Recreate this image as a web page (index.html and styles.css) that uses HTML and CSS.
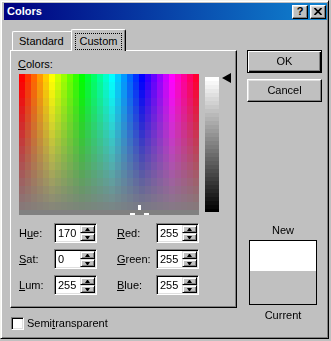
FILE: index.html
```html
<!DOCTYPE html>
<html lang="en">
<head>
    <meta charset="UTF-8">
    <meta name="viewport" content="width=device-width, initial-scale=1.0">
    <title>Colors</title>
    <link rel="stylesheet" href="styles.css">
</head>
<body>
<div class="window">
    <!-- caption bar -->
    <div class="titlebar">
        <span class="title">Colors</span>
        <span class="cap-btn help">?</span>
        <span class="cap-btn close">
            <svg width="8" height="7" viewBox="0 0 8 7"><path d="M0.5 0 L7.5 7 M7.5 0 L0.5 7" stroke="#000" stroke-width="1.7"/></svg>
        </span>
    </div>

    <div class="client">
        <div class="left-col">
            <div class="tabs">
                <div class="tab">Standard</div>
                <div class="tab active"><span class="focus">Custom</span></div>
            </div>

            <div class="panel">
                <div class="caption"><u>C</u>olors:</div>
                <div class="picker">
                    <div class="spectrum">
                        <canvas id="spectrum" width="180" height="141"></canvas>
                        <span class="cross cross-v"></span>
                        <span class="cross cross-l"></span>
                        <span class="cross cross-r"></span>
                    </div>
                    <canvas id="lum" class="lum" width="14" height="135"></canvas>
                    <svg class="lum-arrow" width="9" height="10" viewBox="0 0 9 10"><polygon points="0,5 9,0 9,10" fill="#000"/></svg>
                </div>

                <!-- hsl / rgb values -->
                <div class="fields">
                    <span class="field-label">H<u>u</u>e:</span>
                    <div class="spin-box"><span class="value">170</span><span class="spinner"><span class="spin-btn up"></span><span class="spin-btn down"></span></span></div>
                    <span class="field-label"><u>R</u>ed:</span>
                    <div class="spin-box"><span class="value">255</span><span class="spinner"><span class="spin-btn up"></span><span class="spin-btn down"></span></span></div>

                    <span class="field-label"><u>S</u>at:</span>
                    <div class="spin-box"><span class="value">0</span><span class="spinner"><span class="spin-btn up"></span><span class="spin-btn down"></span></span></div>
                    <span class="field-label"><u>G</u>reen:</span>
                    <div class="spin-box"><span class="value">255</span><span class="spinner"><span class="spin-btn up"></span><span class="spin-btn down"></span></span></div>

                    <span class="field-label"><u>L</u>um:</span>
                    <div class="spin-box"><span class="value">255</span><span class="spinner"><span class="spin-btn up"></span><span class="spin-btn down"></span></span></div>
                    <span class="field-label"><u>B</u>lue:</span>
                    <div class="spin-box"><span class="value">255</span><span class="spinner"><span class="spin-btn up"></span><span class="spin-btn down"></span></span></div>
                </div>
            </div>

            <div class="check-row">
                <span class="checkbox"></span>
                <span>Semi<u>t</u>ransparent</span>
            </div>
        </div>

        <div class="right-col">
            <div class="btn default">OK</div>
            <div class="btn">Cancel</div>
            <div class="swatch">
                <div class="swatch-label new">New</div>
                <div class="preview">
                    <div class="preview-new"></div>
                    <div class="preview-current"></div>
                </div>
                <div class="swatch-label">Current</div>
            </div>
        </div>
    </div>
</div>
<script src="script.js"></script>
</body>
</html>
```

FILE: styles.css
```css
/* dialog styles */

body {
    margin: 0;
    background-color: #c0c0c0;
    font-family: "Liberation Sans", Arial, sans-serif;
    font-size: 11px;
    line-height: 13px;
    color: #000;
}
u {
    text-decoration: underline;
}
.window {
    width: 329px;
    height: 339px;
    box-sizing: border-box;
    border: 1px solid;
    border-color: #f4f4f0 #000 #000 #f4f4f0;
    box-shadow: inset 1px 1px #fff, inset -1px -1px #808080;
    padding: 2px 1px 0 3px;
    background-color: #c0c0c0;
}
.titlebar {
    height: 17px;
    display: flex;
    align-items: center;
    padding: 0 1px 0 3px;
    background: linear-gradient(to right, #000080, #1084d0);
}
.title {
    flex: 1;
    color: #fff;
    font-weight: bold;
}
.cap-btn {
    width: 16px;
    height: 14px;
    box-sizing: border-box;
    display: flex;
    align-items: center;
    justify-content: center;
    background-color: #c0c0c0;
    border: 1px solid;
    border-color: #fff #000 #000 #fff;
    box-shadow: inset -1px -1px #808080, inset 1px 1px #dfdfdf;
}
.help {
    margin-right: 2px;
    font-weight: bold;
    font-size: 11px;
}
.close svg {
    display: block;
}

.client {
    display: flex;
    padding: 9px 0 0 6px;
}
.left-col {
    width: 227px;
}

/* tabs */
.tabs {
    display: flex;
    align-items: flex-end;
    height: 21px;
}
.tab {
    width: 61px;
    height: 19px;
    box-sizing: border-box;
    margin-left: 2px;
    padding: 3px 0 0 6px;
    border: 1px solid;
    border-bottom: none;
    border-color: #fff #000 #000 #fff;
    border-radius: 2px 2px 0 0;
    box-shadow: inset -1px 0 #808080;
    background-color: #c0c0c0;
}
.tab.active {
    position: relative;
    z-index: 1;
    width: 55px;
    height: 22px;
    margin-left: -2px;
    margin-bottom: -1px;
    padding: 3px 0 0 3px;
}
.focus {
    display: block;
    width: 47px;
    height: 17px;
    box-sizing: border-box;
    padding-top: 1px;
    border: 1px dotted #000;
    text-align: center;
}

.panel {
    height: 258px;
    box-sizing: border-box;
    padding: 7px 0 0 8px;
    border: 1px solid;
    border-color: #fff #000 #000 #fff;
    box-shadow: inset -1px -1px #808080;
}
.caption {
    margin-left: -1px;
}

/* color field */
.picker {
    display: flex;
    align-items: flex-start;
    margin-top: 3px;
}
.spectrum {
    position: relative;
    width: 180px;
    height: 141px;
}
.spectrum canvas,
.lum {
    display: block;
}
.lum {
    margin: 3px 0 0 6px;
}
.lum-arrow {
    display: block;
    margin: -1px 0 0 3px;
}
.cross {
    position: absolute;
    background-color: #fff;
}
.cross-v {
    left: 119px;
    top: 131px;
    width: 3px;
    height: 5px;
}
.cross-l {
    left: 111px;
    top: 139px;
    width: 5px;
    height: 2px;
}
.cross-r {
    left: 125px;
    top: 139px;
    width: 5px;
    height: 2px;
}

/* value boxes */
.fields {
    display: grid;
    grid-template-columns: 35px 63px 39px 43px;
    grid-auto-rows: 20px;
    row-gap: 6px;
    align-items: center;
    margin-top: 8px;
}
.spin-box {
    width: 43px;
    height: 20px;
    box-sizing: border-box;
    display: flex;
    padding: 1px 1px 1px 3px;
    border: 1px solid;
    border-color: #808080 #fff #fff #808080;
    box-shadow: inset 1px 1px #000, inset -1px -1px #dfdfdf;
    background-color: #fff;
}
.value {
    flex: 1;
    line-height: 16px;
}
.spinner {
    width: 15px;
    display: flex;
    flex-direction: column;
}
.spin-btn {
    height: 8px;
    box-sizing: border-box;
    display: flex;
    align-items: center;
    justify-content: center;
    border: 1px solid;
    border-color: #dfdfdf #000 #000 #dfdfdf;
    box-shadow: inset 1px 1px #fff, inset -1px -1px #808080;
    background-color: #c0c0c0;
}
.spin-btn::before {
    content: "";
    width: 1px;
    height: 0;
    border-style: solid;
    border-color: transparent;
}
.up::before {
    border-width: 0 2px 3px;
    border-bottom-color: #000;
}
.down::before {
    border-width: 3px 2px 0;
    border-top-color: #000;
}

.check-row {
    display: flex;
    align-items: center;
    margin-top: 9px;
    padding-left: 1px;
}
.checkbox {
    width: 13px;
    height: 13px;
    box-sizing: border-box;
    margin-right: 3px;
    border: 1px solid;
    border-color: #808080 #fff #fff #808080;
    box-shadow: inset 1px 1px #000, inset -1px -1px #dfdfdf;
    background-color: #fff;
}

/* buttons + preview */
.right-col {
    width: 75px;
    margin-left: 10px;
    padding-top: 21px;
    display: flex;
    flex-direction: column;
}
.btn {
    height: 23px;
    box-sizing: border-box;
    display: flex;
    align-items: center;
    justify-content: center;
    border: 1px solid;
    border-color: #fff #000 #000 #fff;
    box-shadow: inset -1px -1px #808080, inset 1px 1px #dfdfdf;
}
.btn.default {
    border-color: #000;
    box-shadow: inset 1px 1px #fff, inset -1px -1px #000, inset -2px -2px #808080;
}
.btn + .btn {
    margin-top: 6px;
}
.swatch {
    width: 68px;
    margin: 122px 0 0 2px;
}
.swatch-label {
    text-align: center;
}
.preview {
    height: 65px;
    box-sizing: border-box;
    margin: 3px 0 4px;
    border: 1px solid #000;
}
.preview-new {
    height: 30px;
    background-color: #fff;
}
.preview-current {
    height: 33px;
    background-color: #c0c0c0;
}
```

FILE: script.js
```js
// hue / saturation field, drawn in blocks like the old common dialog
var spec = document.getElementById("spectrum").getContext("2d");
for (var i = 0; i < 30; i++) {
    for (var j = 0; j < 18; j++) {
        var hue = i * 12;
        var sat = 100 - j * 100 / 17;
        spec.fillStyle = "hsl(" + hue + "," + sat + "%,50%)";
        spec.fillRect(i * 6, j * 8, 6, 8);
    }
}

// luminosity bar (sat is 0, so it is plain gray)
var lum = document.getElementById("lum").getContext("2d");
for (var y = 0; y < 135; y += 4) {
    var v = Math.round(255 * (1 - y / 132));
    if (v < 0) v = 0;
    lum.fillStyle = "rgb(" + v + "," + v + "," + v + ")";
    lum.fillRect(0, y, 14, 4);
}
```
